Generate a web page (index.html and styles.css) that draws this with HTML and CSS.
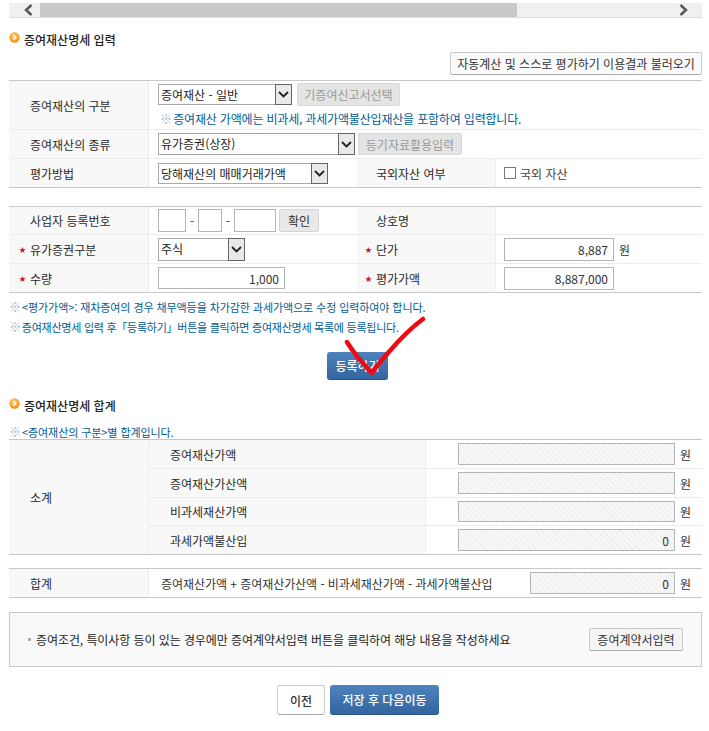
FILE: index.html
```html
<!DOCTYPE html>
<html lang="ko">
<head>
<meta charset="utf-8">
<title>증여재산명세 입력</title>
<link rel="stylesheet" href="styles.css">
</head>
<body>
<svg width="0" height="0" class="defs">
  <defs>
    <radialGradient id="orb" cx="45%" cy="35%" r="70%"><stop offset="0" stop-color="#ffd36a"/><stop offset="1" stop-color="#ee8a10"/></radialGradient>
    <symbol id="bullet" viewBox="0 0 11 11"><circle cx="5.5" cy="5.5" r="5.2" fill="url(#orb)"/><path d="M4.4 3.3 6.6 5.5 4.4 7.7" fill="none" stroke="#fff" stroke-width="1.4"/></symbol>
    <symbol id="chev" viewBox="0 0 11 7"><path d="M1 1 5.5 5.5 10 1" fill="none" stroke="#222" stroke-width="1.8"/></symbol>
  </defs>
</svg>
<div class="page">
  <div class="scrollbar">
    <span class="sb-btn"><svg width="9" height="12" viewBox="0 0 9 12"><path d="M7.5 1 2 6l5.500 5" fill="none" stroke="#555" stroke-width="2.400"/></svg></span>
    <span class="sb-thumb"></span>
    <span class="sb-rest"><svg width="9" height="12" viewBox="0 0 9 12"><path d="M1.500 1 7 6l-5.500 5" fill="none" stroke="#555" stroke-width="2.400"/></svg></span>
  </div>

  <h2 class="title title-first"><svg class="bullet" width="11" height="11"><use href="#bullet"/></svg>증여재산명세 입력</h2>
  <div class="load-row"><button class="btn btn-load">자동계산 및 스스로 평가하기 이용결과 불러오기</button></div>

  <div class="grid table-one">
    <div class="th cell row-tall">증여재산의 구분</div>
    <div class="td span3 cell stack">
      <div class="ctl-row">
        <div class="select sel-gubun"><span class="sel-text">증여재산 - 일반</span><span class="arrow"><svg width="11" height="7"><use href="#chev"/></svg></span></div>
        <button class="btn btn-off btn-gift">기증여신고서선택</button>
      </div>
      <p class="hint"><span class="mark">※</span> 증여재산 가액에는 비과세, 과세가액불산입재산을 포함하여 입력합니다.</p>
    </div>
    <div class="th cell">증여재산의 종류</div>
    <div class="td span3 cell">
      <div class="ctl-row">
        <div class="select sel-kind"><span class="sel-text">유가증권(상장)</span><span class="arrow"><svg width="11" height="7"><use href="#chev"/></svg></span></div>
        <button class="btn btn-off btn-reg">등기자료활용입력</button>
      </div>
    </div>
    <div class="th cell last">평가방법</div>
    <div class="td cell last">
      <div class="select sel-method"><span class="sel-text">당해재산의 매매거래가액</span><span class="arrow"><svg width="11" height="7"><use href="#chev"/></svg></span></div>
    </div>
    <div class="th th-side cell last">국외자산 여부</div>
    <div class="td td-side cell last"><label class="check"><input type="checkbox" class="box">국외 자산</label></div>
  </div>

  <div class="grid table-two">
    <div class="th cell">사업자 등록번호</div>
    <div class="td cell biz">
      <input class="field biz-a" type="text"><span class="dash">-</span><input class="field biz-b" type="text"><span class="dash">-</span><input class="field biz-c" type="text"><button class="btn btn-check">확인</button>
    </div>
    <div class="th th-side cell">상호명</div>
    <div class="td cell"></div>

    <div class="th th-req cell"><span class="star">★</span>유가증권구분</div>
    <div class="td cell">
      <div class="select sel-sec"><span class="sel-text">주식</span><span class="arrow"><svg width="11" height="7"><use href="#chev"/></svg></span></div>
    </div>
    <div class="th th-side th-req-side cell"><span class="star">★</span>단가</div>
    <div class="td td-side cell"><input class="field num price" type="text" value="8,887"><span class="unit">원</span></div>

    <div class="th th-req cell last"><span class="star">★</span>수량</div>
    <div class="td cell last"><input class="field num qty" type="text" value="1,000"></div>
    <div class="th th-side th-req-side cell last"><span class="star">★</span>평가가액</div>
    <div class="td td-side cell last"><input class="field num price" type="text" value="8,887,000"></div>
  </div>

  <div class="notes">
    <p class="note"><span class="mark">※</span> &lt;평가가액&gt;: 재차증여의 경우 채무액등을 차가감한 과세가액으로 수정 입력하여야 합니다.</p>
    <p class="note note-tight"><span class="mark">※</span> 증여재산명세 입력 후「등록하기」버튼을 클릭하면 증여재산명세 목록에 등록됩니다.</p>
  </div>

  <div class="submit-row"><button class="btn btn-blue btn-add">등록하기</button></div>

  <h2 class="title title-second"><svg class="bullet" width="11" height="11"><use href="#bullet"/></svg>증여재산명세 합계</h2>
  <p class="note note-sum"><span class="mark">※</span> &lt;증여재산의 구분&gt;별 합계입니다.</p>

  <div class="grid table-three">
    <div class="th cell side-head">소계</div>
    <div class="th th-sub cell">증여재산가액</div>
    <div class="td td-amt cell"><input class="field num hatch amt" type="text" readonly><span class="unit">원</span></div>
    <div class="th th-sub cell">증여재산가산액</div>
    <div class="td td-amt cell"><input class="field num hatch amt" type="text" readonly><span class="unit">원</span></div>
    <div class="th th-sub cell short">비과세재산가액</div>
    <div class="td td-amt cell short"><input class="field num hatch amt" type="text" readonly><span class="unit">원</span></div>
    <div class="th th-sub cell last">과세가액불산입</div>
    <div class="td td-amt cell last"><input class="field num hatch amt" type="text" readonly value="0"><span class="unit">원</span></div>
  </div>

  <div class="grid table-total">
    <div class="th cell last">합계</div>
    <div class="td td-total cell last">
      <span class="formula">증여재산가액 + 증여재산가산액 - 비과세재산가액 - 과세가액불산입</span>
      <span class="total-amt"><input class="field num hatch total" type="text" readonly value="0"><span class="unit">원</span></span>
    </div>
  </div>

  <div class="notice">
    <span class="notice-text"><i class="sq"></i>증여조건, 특이사항 등이 있는 경우에만 증여계약서입력 버튼을 클릭하여 해당 내용을 작성하세요</span>
    <button class="btn btn-contract">증여계약서입력</button>
  </div>

  <div class="actions">
    <button class="btn btn-prev">이전</button>
    <button class="btn btn-blue btn-next">저장 후 다음이동</button>
  </div>
</div>

<svg class="tick" width="90" height="64" viewBox="0 0 90 64"><path d="M4 26 C10 36 20 48 29 57 C34 49 39 44 45 37 C56 24 68 12 80 3" fill="none" stroke="#ee0a12" stroke-width="4.500" stroke-linecap="round" stroke-linejoin="round"/></svg>
</body>
</html>
```
FILE: styles.css
```css
* { box-sizing: border-box; }
html, body { margin: 0; padding: 0; background: #fff; }
body {
  position: relative;
  font-family: "Noto Sans CJK KR", "Noto Sans", sans-serif;
  font-size: 12px;
  color: #333;
  height: 731px;
  overflow: hidden;
}
p, h2 { margin: 0; }
.defs { position: absolute; }
.page { width: 693px; margin-left: 9px; padding-top: 3px; }

.scrollbar { display: flex; height: 15px; background: #f0f0f0; border-bottom: 1px solid #ddd; }
.sb-btn { width: 31px; display: flex; align-items: center; justify-content: center; padding-left: 8px; }
.sb-thumb { width: 477px; background: #c9c9c9; }
.sb-rest { flex: 1; display: flex; align-items: center; justify-content: flex-end; padding-right: 14px; }

.title { display: flex; align-items: center; height: 16px; font-size: 12px; font-weight: 500; color: #222; }
.title-first { margin-top: 13px; }
.title-second { margin-top: 17px; }
.bullet { margin-right: 4px; margin-top: -4px; flex: none; }

.load-row { display: flex; justify-content: flex-end; margin-top: 5px; }

.btn {
  font: inherit;
  color: #333;
  background: #f6f6f6;
  border: 1px solid #c8c8c8;
  border-bottom-color: #aaa;
  border-radius: 2px;
  padding: 0;
  white-space: nowrap;
}
.btn-load { width: 252px; height: 23px; background: #fafafa; }
.btn-off { background: #e4e4e4; color: #999; border-color: #d8d8d8; height: 23px; }
.btn-gift { width: 103px; margin-top: -1px; margin-left: 5px; }
.btn-reg { width: 104px; height: 22px; margin-left: 3px; }
.btn-check { width: 40px; height: 23px; margin-left: 3px; background: #e8e8e8; border-color: #d4d4d4; }
.btn-blue {
  color: #fff;
  font-weight: 500;
  border: 0;
  border-bottom: 1px solid #2b5586;
  border-radius: 3px;
  background: linear-gradient(#4f83bd, #3365a1);
}
.btn-add { width: 61px; height: 28px; }
.btn-contract { width: 94px; height: 23px; background: #f4f4f4; }
.btn-prev { width: 48px; height: 30px; background: #fff; border-color: #ccc; border-bottom-color: #aaa; border-radius: 3px; font-weight: 500; }
.btn-next { width: 109px; height: 30px; }

.grid { display: grid; grid-template-columns: 140px 208px 139px 206px; border-top: 1px solid #c8c8c8; }
.table-one { margin-top: 5px; grid-template-rows: 49px 29px 29px; }
.table-two { margin-top: 18px; grid-template-rows: 28px 29px 29px; }
.table-three { margin-top: 0; grid-template-columns: 140px 277px 276px; grid-template-rows: 29px 29px 28px 29px; }
.table-total { margin-top: 13px; grid-template-columns: 140px 553px; grid-template-rows: 29px; }

.cell { display: flex; align-items: center; border-bottom: 1px solid #ececec; }
.cell.last { border-bottom-color: #c8c8c8; }
.th { background: #f8f8f8; border-right: 1px solid #ececec; padding-left: 21px; color: #2a2a2a; }
.td { padding-left: 9px; }
.span3 { grid-column: span 3; }
.stack { flex-direction: column; align-items: flex-start; justify-content: flex-start; padding-top: 3px; }
.ctl-row { display: flex; align-items: flex-start; }
.hint { color: #005c94; font-size: 12px; line-height: 16px; letter-spacing: -0.18px; margin-top: 5px; margin-left: 2px; white-space: nowrap; }
.mark { color: #9db4c8; font-size: 12px; letter-spacing: -2px; }

.select { display: flex; background: #fff; border: 1px solid #a9a9a9; }
.sel-text { flex: 1; padding-left: 2px; line-height: 19px; color: #222; white-space: nowrap; overflow: hidden; }
.arrow { width: 17px; display: flex; align-items: center; justify-content: center; background: #e9e9e9; border: 1px solid #666; margin: -1px -1px -1px 0; }
.sel-gubun { width: 134px; height: 21px; }
.sel-kind { width: 197px; height: 22px; }
.sel-method { width: 170px; height: 21px; }
.sel-sec { width: 87px; height: 23px; }

.th-side { padding-left: 19px; }
.td-side { padding-left: 8px; }
.th-req { padding-left: 10px; }
.th-req-side { padding-left: 8px; }
.star { width: 11px; font-size: 7px; color: #c8102e; flex: none; }

.check { display: flex; align-items: center; color: #444; }
.box { appearance: none; width: 12px; height: 12px; margin: 0 4px 0 0; background: #fff; border: 1px solid #777; }

.field {
  font: inherit;
  color: #333;
  background: #fff;
  border: 1px solid #b4b4b4;
  border-radius: 0;
  padding: 0 4px;
  margin: 0;
  height: 23px;
}
.num { text-align: right; padding-right: 5px; }
.biz-a { width: 28px; }
.biz-b { width: 24px; }
.biz-c { width: 42px; }
.dash { width: 12px; text-align: center; color: #444; }
.price { width: 110px; }
.qty { width: 127px; height: 22px; }
.unit { margin-left: 5px; color: #333; }
.hatch {
  background: repeating-linear-gradient(45deg, #f7f7f7 0, #f7f7f7 3px, #eeeeee 3px, #eeeeee 4px);
  height: 22px;
}
.amt { width: 217px; }
.total { width: 145px; }

.side-head { grid-row: span 4; border-bottom-color: #c8c8c8; }
.th-sub { padding-left: 21px; }
.td-amt { padding-left: 32px; }
.short .field { height: 21px; }
.td-total { justify-content: space-between; padding-left: 12px; padding-right: 11px; }
.formula { color: #333; letter-spacing: -0.05px; }
.total-amt { display: flex; align-items: center; }

.notes { margin-top: 4px; }
.note { color: #005c94; font-size: 11px; line-height: 20px; letter-spacing: -0.08px; white-space: nowrap; }
.note-tight { letter-spacing: -0.25px; }
.note-sum { line-height: 14px; margin-top: 12px; }
.submit-row { display: flex; justify-content: center; padding-left: 4px; margin-top: 15px; }

.notice {
  display: flex;
  align-items: center;
  justify-content: space-between;
  margin-top: 14px;
  height: 55px;
  background: #f9f9f9;
  border: 1px solid #c8c8c8;
  padding: 0 18px 0 18px;
}
.notice-text { display: flex; align-items: center; color: #222; letter-spacing: -0.08px; }
.sq { width: 3px; height: 3px; background: #aaa; margin-right: 5px; flex: none; }

.actions { display: flex; justify-content: center; gap: 5px; padding-left: 5px; margin-top: 18px; }

.tick { position: absolute; left: 343px; top: 316px; }
```
